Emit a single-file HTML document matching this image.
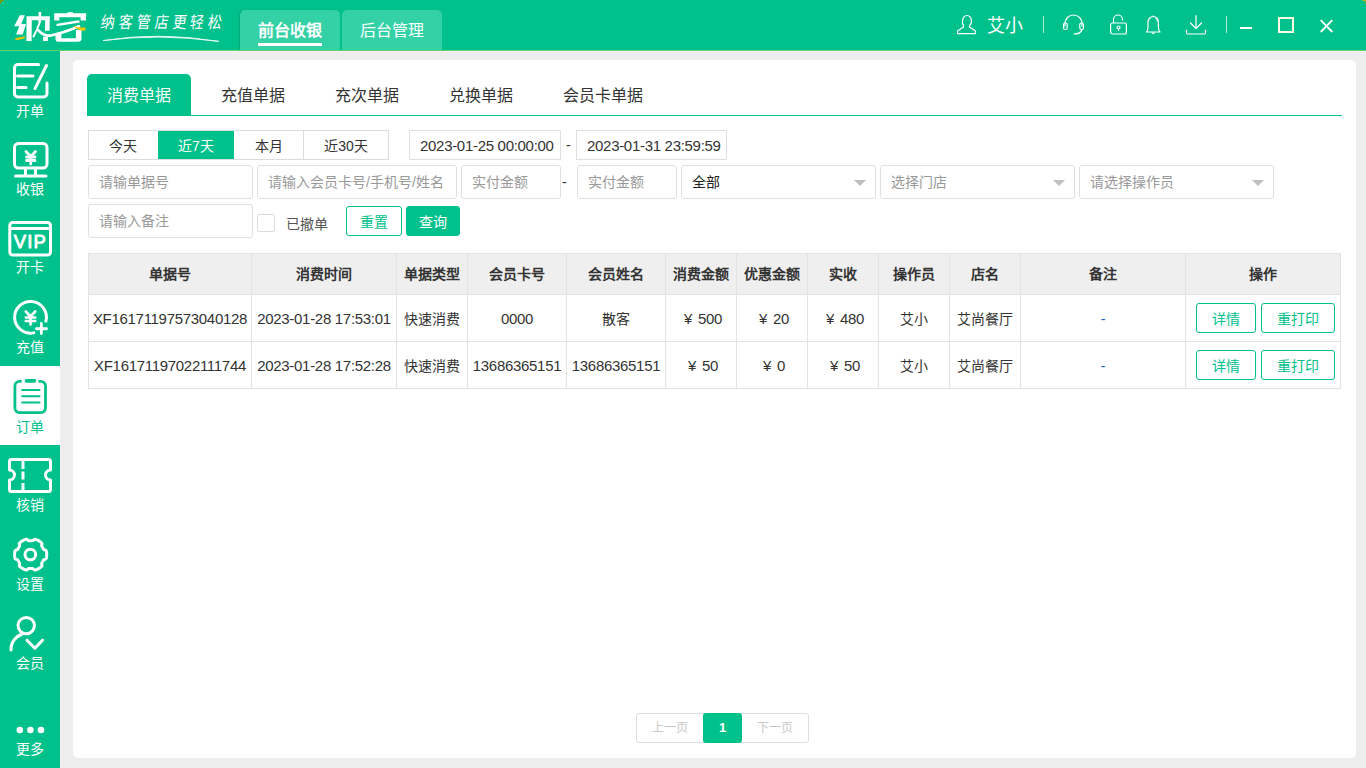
<!DOCTYPE html>
<html lang="zh-CN">
<head>
<meta charset="utf-8">
<style>
*{box-sizing:border-box;margin:0;padding:0}
html,body{width:1366px;height:768px;overflow:hidden}
body{position:relative;background:#ededed;font-family:"Liberation Sans",sans-serif;font-size:14px;color:#333}
.abs{position:absolute}
#top{position:absolute;left:0;top:0;width:1366px;height:50px;background:#00c08b}
#gline{position:absolute;left:0;top:50px;width:1366px;height:1px;background:#5cd46c}
#pline{position:absolute;left:60px;top:51px;width:1306px;height:1px;background:#f8eef4}
#vline{position:absolute;left:60px;top:51px;width:1px;height:717px;background:#f8eef4}
#side{position:absolute;left:0;top:51px;width:60px;height:717px;background:#00c08b}
.item{position:absolute;left:0;width:60px;height:79px;color:#fff}
.item svg{position:absolute;left:0;top:0}
.item .lb{position:absolute;left:0;width:60px;text-align:center;font-size:14px;line-height:16px}
.item.act{background:#fff;color:#00c08b}
.ttab{position:absolute;top:10px;height:40px;width:100px;background:#33d1a5;border-radius:5px 5px 0 0;color:#fff;font-size:16px;line-height:42px;text-align:center}
#card{position:absolute;left:73px;top:60px;width:1283px;height:698px;background:#fff;border-radius:5px}
.tab{position:absolute;top:74px;height:42px;line-height:44px;font-size:16px;color:#333;padding:0 20px}
.tab.act{background:#00c08b;color:#fff;border-radius:5px 5px 0 0}
#tabline{position:absolute;left:87px;top:115px;width:1255px;height:1px;background:#00c08b}
.bt{position:absolute;top:131px;height:30px;line-height:30px;text-align:center;color:#333}
.inp{position:absolute;height:34px;border:1px solid #e0e0e0;border-radius:3px;line-height:32px;padding-left:10px;color:#999;background:#fff;white-space:nowrap;overflow:hidden}
.arrow{position:absolute;top:14px;right:9px;width:0;height:0;border-left:6px solid transparent;border-right:6px solid transparent;border-top:6px solid #bfbfbf}
.gbtn{position:absolute;height:30px;line-height:30px;border:1px solid #00c08b;border-radius:3px;color:#00c08b;text-align:center;background:#fff}
table{position:absolute;left:88px;top:253px;border-collapse:collapse;table-layout:fixed}
td,th{border:1px solid #e3e3e3;text-align:center;white-space:nowrap;padding:0;overflow:hidden}
th{background:#efefef;height:41px;padding-bottom:2px;font-weight:bold;font-size:14px;color:#333}
td{height:47px;color:#333}
td.bl{color:#0a66cc;padding-top:2px}
td.n{font-size:15px;letter-spacing:-0.3px}
td.y{padding-left:4px}
</style>
</head>
<body>
<div id="top">
<svg class="abs" style="left:0;top:0" width="100" height="50" viewBox="0 0 100 50">
<g fill="#fff" stroke="none">
<polygon points="19.8,15.3 24.9,15.3 21.3,23.9 26.1,23.9 22.6,34.6 16,34.6 19.4,26.2 14.2,26.2"/>
<polygon points="26.6,16.2 31.8,16.2 31.6,41 26.4,41"/>
<polygon points="31.5,16.2 49.8,16.2 49.6,30.8 45,30.8 45.1,20.2 31.5,20.2"/>
<polygon points="38.6,12 41.2,12 41,22 38.4,22"/>
<polygon points="43,36.8 48,36.8 47.8,41 43,41"/>
<polygon points="54.2,13.2 86.2,13.2 86,20.5 80.6,20.5 80.6,17.3 59.4,17.3 59.4,20.5 54.2,20.5"/>
<polygon points="67.5,12.2 73.2,12.2 73.2,14 67.5,14"/>
</g>
<g fill="none" stroke="#fff" stroke-linecap="round">
<path d="M40 21.5 Q37.5 29.5 33.5 36.5" stroke-width="2"/>
<path d="M38.5 30.5 Q44 36.3 50.5 35.6 Q62 33.5 79 26.3" stroke-width="2.6"/>
<path d="M57.5 24.8 L78.5 21.5" stroke-width="2.3"/>
</g>
<path d="M55.5 34 Q56 33 61.4 32.2 V38.2 H75.9 V30 L81.5 29.5 V40 Q81 41.8 78 41.8 H58 Q55.5 41.8 55.5 39.5 Z" fill="#fff"/>
<path d="M15.3 38.2 Q20 37 25.2 36.2 L24.6 38.2 Q20 39.6 15.5 40.2 Z" fill="#f4c400"/>
<path d="M73.5 26.2 Q78 28 85.8 27.5 L85 30.8 Q79 31 73.5 26.2 Z" fill="#f4c400"/>
</svg>
<div class="abs" style="left:101px;top:12.5px;font-family:'Liberation Serif',serif;font-size:14px;line-height:20px;color:#fff;font-weight:200;letter-spacing:3.8px;white-space:nowrap;transform:skewX(-8deg) scaleY(1.18);transform-origin:0 50%">纳客管店更轻松</div>
<svg class="abs" style="left:100px;top:30px" width="130" height="15" viewBox="0 0 130 15"><path d="M3 10.6 Q58 1.5 119 11.4 Q58 3.2 3 10.6 Z" fill="#fff" stroke="#fff" stroke-width="0.9" stroke-linejoin="round" opacity="0.92"/></svg>
<div class="ttab" style="left:240px;box-shadow:-1px 0 1.5px rgba(0,70,40,0.18)"><b>前台收银</b><div class="abs" style="left:18px;top:33px;width:64px;height:2.5px;background:#fff;line-height:0"></div></div>
<div class="ttab" style="left:342px">后台管理</div>
<svg class="abs" style="left:955px;top:13px" width="24" height="24" viewBox="0 0 24 24" fill="none" stroke="#fff" stroke-width="1.2">
<path d="M7.5 8 a4.5 5.5 0 0 1 9 0 a4.5 5.5 0 0 1 -2 4.7 v1.3 l6 4 v2.6 H2.5 v-2.6 l6 -4 v-1.3 a4.5 5.5 0 0 1 -1 -4.7 Z" stroke-linejoin="round"/>
</svg>
<div class="abs" style="left:987px;top:14px;font-size:18px;line-height:24px;color:#fff">艾小</div>
<div class="abs" style="left:1043px;top:16px;width:1px;height:17px;background:#b5ecd6"></div>
<svg class="abs" style="left:1061px;top:13px" width="25" height="24" viewBox="0 0 25 24" fill="none" stroke="#fff" stroke-width="1.2" stroke-linecap="round">
<path d="M4 13 V10.5 a8.5 8.5 0 0 1 17 0 V13"/>
<rect x="2.6" y="10" width="3.6" height="6.5" rx="1.5"/><rect x="18.8" y="10" width="3.6" height="6.5" rx="1.5"/>
<path d="M21 16.5 Q20 21 13 21"/>
</svg>
<svg class="abs" style="left:1108px;top:13px" width="20" height="24" viewBox="0 0 20 24" fill="none" stroke="#fff" stroke-width="1.2">
<path d="M5.5 10 V6.5 a4.5 4.5 0 0 1 9 0 V7.5"/>
<rect x="2.6" y="10" width="15.8" height="11" rx="2"/>
<circle cx="10.5" cy="14.5" r="1.5"/><path d="M10.5 16 V18"/>
</svg>
<svg class="abs" style="left:1143px;top:13px" width="20" height="24" viewBox="0 0 20 24" fill="none" stroke="#fff" stroke-width="1.2" stroke-linejoin="round">
<path d="M3.5 19 Q5 17.5 5 14 V9.5 a5.2 6 0 0 1 10.4 0 V14 Q15.4 17.5 17 19 Z"/>
<path d="M8.8 19.5 Q10.2 21.5 11.6 19.5"/><path d="M10.2 2.5 V3.5"/><path d="M12.8 5.5 Q14 6.5 14.2 8.2" stroke-width="0.9"/>
</svg>
<svg class="abs" style="left:1184px;top:13px" width="24" height="24" viewBox="0 0 24 24" fill="none" stroke="#fff" stroke-width="1.2" stroke-linecap="round" stroke-linejoin="round">
<path d="M12 2.5 V15.5 M6.5 10 L12 15.5 L17.5 10"/>
<path d="M2.5 17 V19.5 Q2.5 21 4 21 H20 Q21.5 21 21.5 19.5 V17"/>
</svg>
<div class="abs" style="left:1226px;top:16px;width:1px;height:17px;background:#b5ecd6"></div>
<div class="abs" style="left:1240px;top:27px;width:12px;height:2px;background:#fff"></div>
<div class="abs" style="left:1278px;top:17px;width:16px;height:16px;border:2px solid #fffbe6"></div>
<svg class="abs" style="left:1318px;top:18px" width="16" height="16" viewBox="0 0 16 16" stroke="#fff" stroke-width="1.8"><path d="M2.7 2.2 L14.3 14 M14.3 2.2 L2.7 14"/></svg>
</div>

<div id="gline"></div>
<div id="side">
<div class="item" style="top:-1px">
<svg width="60" height="79" viewBox="0 0 60 79" fill="none" stroke="#fff" stroke-width="3" stroke-linecap="round" stroke-linejoin="round">
<path d="M38.5 14.5 H18 a3.5 3.5 0 0 0 -3.5 3.5 V43.5 a3.5 3.5 0 0 0 3.5 3.5 H43.5 a3.5 3.5 0 0 0 3.5 -3.5 V33"/>
<path d="M17.5 26 H33"/><path d="M17.5 37.5 H26"/><path d="M46.5 15.5 L35 38.5"/>
</svg>
<div class="lb" style="top:53px">开单</div>
</div>
<div class="item" style="top:78px">
<svg width="60" height="79" viewBox="0 0 60 79" fill="none" stroke="#fff" stroke-width="3" stroke-linecap="round" stroke-linejoin="round">
<rect x="14.5" y="14.5" width="32.5" height="24.5" rx="4"/>
<path d="M25.5 39 V46" stroke-linecap="butt"/><path d="M35.5 39 V46" stroke-linecap="butt"/><path d="M15.5 47 H46"/>
<path d="M26 22.5 L30.7 27.5 L35.5 22.5 M30.7 27.5 V35 M26.5 28 H35 M26.5 31.5 H35" stroke-width="2.8"/>
</svg>
<div class="lb" style="top:52px">收银</div>
</div>
<div class="item" style="top:157px">
<svg width="60" height="79" viewBox="0 0 60 79" fill="none" stroke="#fff" stroke-width="3" stroke-linejoin="round">
<rect x="9.8" y="14.5" width="40.7" height="32.5" rx="3"/>
<path d="M10 20.5 H50"/>
<text x="30.4" y="39.6" fill="#fff" stroke="#fff" stroke-width="0.9" font-family="Liberation Sans" font-size="18.5" text-anchor="middle" letter-spacing="1.2">VIP</text>
</svg>
<div class="lb" style="top:50.5px">开卡</div>
</div>
<div class="item" style="top:236px">
<svg width="60" height="79" viewBox="0 0 60 79" fill="none" stroke="#fff" stroke-width="3" stroke-linecap="round" stroke-linejoin="round">
<path d="M45.93 34.15 A15.9 15.9 0 1 0 33.8 45.85"/>
<path d="M25.8 24.5 L30.5 29.5 L35.2 24.5 M30.5 29.5 V37.5 M25.8 30.5 H35.2 M25.8 34 H35.2" stroke-width="2.6"/>
<path d="M36.5 41.75 H46.5 M41.35 36.5 V46.5" stroke-width="2.8"/>
</svg>
<div class="lb" style="top:51.5px">充值</div>
</div>
<div class="item act" style="top:315px">
<svg width="60" height="79" viewBox="0 0 60 79" fill="none" stroke="#00c08b" stroke-width="2.8" stroke-linecap="round" stroke-linejoin="round">
<path d="M20.5 15.4 H19.4 a4.5 4.5 0 0 0 -4.5 4.5 V42.1 a4.5 4.5 0 0 0 4.5 4.5 H41 a4.5 4.5 0 0 0 4.5 -4.5 V19.9 a4.5 4.5 0 0 0 -4.5 -4.5 H39.5"/>
<path d="M26.5 14.9 H34.5" stroke-width="3.6"/>
<path d="M22.2 24 H39.5 M22.2 30.3 H39.5 M22.2 36.5 H39.5" stroke-width="2.1"/>
</svg>
<div class="lb" style="top:53px">订单</div>
</div>
<div class="item" style="top:394px">
<svg width="60" height="79" viewBox="0 0 60 79" fill="none" stroke="#fff" stroke-width="3" stroke-linecap="round" stroke-linejoin="round">
<path d="M11.5 14.5 H48.5 a2 2 0 0 1 2 2 V25 a5 5 0 0 0 0 10 V44.5 a2 2 0 0 1 -2 2 H11.5 a2 2 0 0 1 -2 -2 V35 a5 5 0 0 0 0 -10 V16.5 a2 2 0 0 1 2 -2 Z"/>
<path d="M23 16 V24 M23 26.5 V34.4 M23 38 V45.5" stroke-linecap="butt"/>
</svg>
<div class="lb" style="top:51.5px">核销</div>
</div>
<div class="item" style="top:473px">
<svg width="60" height="79" viewBox="0 0 60 79" fill="none" stroke="#fff" stroke-width="3" stroke-linecap="round" stroke-linejoin="round">
<path id="gear" d="M46.70 30.65 L46.70 30.93 L46.69 31.21 L46.68 31.49 L46.66 31.77 L46.64 32.05 L46.61 32.33 L46.58 32.61 L46.54 32.88 L46.50 33.16 L46.45 33.44 L46.40 33.71 L46.34 33.98 L46.26 34.25 L46.17 34.52 L46.03 34.77 L45.82 35.00 L45.50 35.19 L45.05 35.33 L44.58 35.44 L44.17 35.57 L43.88 35.73 L43.67 35.91 L43.52 36.11 L43.39 36.32 L43.27 36.53 L43.15 36.75 L43.04 36.96 L42.92 37.18 L42.81 37.39 L42.69 37.60 L42.57 37.81 L42.44 38.02 L42.31 38.22 L42.18 38.43 L42.05 38.64 L41.93 38.84 L41.81 39.06 L41.72 39.30 L41.66 39.57 L41.67 39.90 L41.77 40.31 L41.90 40.78 L42.00 41.24 L42.00 41.61 L41.91 41.91 L41.76 42.16 L41.58 42.37 L41.38 42.57 L41.18 42.76 L40.97 42.94 L40.75 43.12 L40.53 43.30 L40.31 43.47 L40.08 43.63 L39.86 43.80 L39.63 43.96 L39.39 44.11 L39.16 44.26 L38.92 44.41 L38.67 44.55 L38.43 44.69 L38.19 44.82 L37.94 44.95 L37.69 45.08 L37.43 45.20 L37.18 45.31 L36.92 45.42 L36.66 45.53 L36.40 45.63 L36.14 45.73 L35.87 45.82 L35.61 45.90 L35.34 45.98 L35.06 46.02 L34.77 46.03 L34.47 45.97 L34.14 45.78 L33.80 45.46 L33.46 45.11 L33.15 44.82 L32.87 44.64 L32.60 44.56 L32.35 44.52 L32.11 44.52 L31.86 44.52 L31.62 44.53 L31.38 44.54 L31.14 44.54 L30.89 44.55 L30.65 44.55 L30.41 44.55 L30.16 44.54 L29.92 44.54 L29.68 44.53 L29.44 44.52 L29.19 44.52 L28.95 44.52 L28.70 44.56 L28.43 44.64 L28.15 44.82 L27.84 45.11 L27.50 45.46 L27.16 45.78 L26.83 45.97 L26.53 46.03 L26.24 46.02 L25.96 45.98 L25.69 45.90 L25.43 45.82 L25.16 45.73 L24.90 45.63 L24.64 45.53 L24.38 45.42 L24.12 45.31 L23.87 45.20 L23.61 45.08 L23.36 44.95 L23.11 44.82 L22.87 44.69 L22.62 44.55 L22.38 44.41 L22.14 44.26 L21.91 44.11 L21.67 43.96 L21.44 43.80 L21.22 43.63 L20.99 43.47 L20.77 43.30 L20.55 43.12 L20.33 42.94 L20.12 42.76 L19.92 42.57 L19.72 42.37 L19.54 42.16 L19.39 41.91 L19.30 41.61 L19.30 41.24 L19.40 40.78 L19.53 40.31 L19.63 39.90 L19.64 39.57 L19.58 39.30 L19.49 39.06 L19.37 38.84 L19.25 38.64 L19.12 38.43 L18.99 38.22 L18.86 38.02 L18.73 37.81 L18.61 37.60 L18.49 37.39 L18.38 37.18 L18.26 36.96 L18.15 36.75 L18.03 36.53 L17.91 36.32 L17.78 36.11 L17.63 35.91 L17.42 35.73 L17.13 35.57 L16.72 35.44 L16.25 35.33 L15.80 35.19 L15.48 35.00 L15.27 34.77 L15.13 34.52 L15.04 34.25 L14.96 33.98 L14.90 33.71 L14.85 33.44 L14.80 33.16 L14.76 32.88 L14.72 32.61 L14.69 32.33 L14.66 32.05 L14.64 31.77 L14.62 31.49 L14.61 31.21 L14.60 30.93 L14.60 30.65 L14.60 30.37 L14.61 30.09 L14.62 29.81 L14.64 29.53 L14.66 29.25 L14.69 28.97 L14.72 28.69 L14.76 28.42 L14.80 28.14 L14.85 27.86 L14.90 27.59 L14.96 27.32 L15.04 27.05 L15.13 26.78 L15.27 26.53 L15.48 26.30 L15.80 26.11 L16.25 25.97 L16.72 25.86 L17.13 25.73 L17.42 25.57 L17.63 25.39 L17.78 25.19 L17.91 24.98 L18.03 24.77 L18.15 24.55 L18.26 24.34 L18.38 24.12 L18.49 23.91 L18.61 23.70 L18.73 23.49 L18.86 23.28 L18.99 23.08 L19.12 22.87 L19.25 22.66 L19.37 22.46 L19.49 22.24 L19.58 22.00 L19.64 21.73 L19.63 21.40 L19.53 20.99 L19.40 20.52 L19.30 20.06 L19.30 19.69 L19.39 19.39 L19.54 19.14 L19.72 18.93 L19.92 18.73 L20.12 18.54 L20.33 18.36 L20.55 18.18 L20.77 18.00 L20.99 17.83 L21.22 17.67 L21.44 17.50 L21.67 17.34 L21.91 17.19 L22.14 17.04 L22.38 16.89 L22.62 16.75 L22.87 16.61 L23.11 16.48 L23.36 16.35 L23.61 16.22 L23.87 16.10 L24.12 15.99 L24.38 15.88 L24.64 15.77 L24.90 15.67 L25.16 15.57 L25.43 15.48 L25.69 15.40 L25.96 15.32 L26.24 15.28 L26.53 15.27 L26.83 15.33 L27.16 15.52 L27.50 15.84 L27.84 16.19 L28.15 16.48 L28.43 16.66 L28.70 16.74 L28.95 16.78 L29.19 16.78 L29.44 16.78 L29.68 16.77 L29.92 16.76 L30.16 16.76 L30.41 16.75 L30.65 16.75 L30.89 16.75 L31.14 16.76 L31.38 16.76 L31.62 16.77 L31.86 16.78 L32.11 16.78 L32.35 16.78 L32.60 16.74 L32.87 16.66 L33.15 16.48 L33.46 16.19 L33.80 15.84 L34.14 15.52 L34.47 15.33 L34.77 15.27 L35.06 15.28 L35.34 15.32 L35.61 15.40 L35.87 15.48 L36.14 15.57 L36.40 15.67 L36.66 15.77 L36.92 15.88 L37.18 15.99 L37.43 16.10 L37.69 16.22 L37.94 16.35 L38.19 16.48 L38.43 16.61 L38.67 16.75 L38.92 16.89 L39.16 17.04 L39.39 17.19 L39.63 17.34 L39.86 17.50 L40.08 17.67 L40.31 17.83 L40.53 18.00 L40.75 18.18 L40.97 18.36 L41.18 18.54 L41.38 18.73 L41.58 18.93 L41.76 19.14 L41.91 19.39 L42.00 19.69 L42.00 20.06 L41.90 20.52 L41.77 20.99 L41.67 21.40 L41.66 21.73 L41.72 22.00 L41.81 22.24 L41.93 22.46 L42.05 22.66 L42.18 22.87 L42.31 23.08 L42.44 23.28 L42.57 23.49 L42.69 23.70 L42.81 23.91 L42.92 24.12 L43.04 24.34 L43.15 24.55 L43.27 24.77 L43.39 24.98 L43.52 25.19 L43.67 25.39 L43.88 25.57 L44.17 25.73 L44.58 25.86 L45.05 25.97 L45.50 26.11 L45.82 26.30 L46.03 26.53 L46.17 26.78 L46.26 27.05 L46.34 27.32 L46.40 27.59 L46.45 27.86 L46.50 28.14 L46.54 28.42 L46.58 28.69 L46.61 28.97 L46.64 29.25 L46.66 29.53 L46.68 29.81 L46.69 30.09 L46.70 30.37 L46.70 30.65Z"/>
<circle cx="30.35" cy="30.6" r="5.35"/>
</svg>
<div class="lb" style="top:52px">设置</div>
</div>
<div class="item" style="top:552px">
<svg width="60" height="79" viewBox="0 0 60 79" fill="none" stroke="#fff" stroke-width="3" stroke-linecap="round" stroke-linejoin="round">
<circle cx="26.25" cy="22.6" r="8.2"/>
<path d="M21.5 31.5 A15.5 15.5 0 0 0 11 47"/>
<path d="M27 37.2 L34.9 45.3 L42.5 37.2"/>
</svg>
<div class="lb" style="top:52px">会员</div>
</div>
<div class="item" style="top:637px">
<svg width="60" height="79" viewBox="0 0 60 79" fill="#fff" stroke="none">
<circle cx="19.8" cy="42" r="3.3"/><circle cx="30.4" cy="42" r="3.3"/><circle cx="41" cy="42" r="3.3"/>
</svg>
<div class="lb" style="top:53px">更多</div>
</div>
</div>
<div id="pline"></div>
<div id="vline"></div>
<div id="card"></div>
<div class="tab act" style="left:87px;width:104px">消费单据</div>
<div class="tab" style="left:201px">充值单据</div>
<div class="tab" style="left:315px">充次单据</div>
<div class="tab" style="left:429px">兑换单据</div>
<div class="tab" style="left:543px">会员卡单据</div>
<div id="tabline"></div>
<div class="abs" style="left:88px;top:130px;width:301px;height:30px;border:1px solid #dcdcdc;background:#fff"></div>
<div class="abs" style="left:303px;top:131px;width:1px;height:28px;background:#dcdcdc"></div>
<div class="abs" style="left:158px;top:131px;width:76px;height:28px;background:#00c08b"></div>
<div class="bt" style="left:88px;width:70px">今天</div>
<div class="bt" style="left:158px;width:76px;color:#fff">近7天</div>
<div class="bt" style="left:234px;width:69px">本月</div>
<div class="bt" style="left:304px;width:84px">近30天</div>
<div class="inp" style="left:409px;top:130px;width:152px;height:30px;line-height:28px;border-radius:0;color:#333;padding-left:10px;padding-top:1px;font-size:15px;letter-spacing:-0.3px">2023-01-25 00:00:00</div>
<div class="abs" style="left:566px;top:130px;line-height:30px;color:#333">-</div>
<div class="inp" style="left:576px;top:130px;width:151px;height:30px;line-height:28px;border-radius:0;color:#333;padding-left:10px;padding-top:1px;font-size:15px;letter-spacing:-0.3px">2023-01-31 23:59:59</div>
<div class="inp" style="left:88px;top:165px;width:165px">请输单据号</div>
<div class="inp" style="left:257px;top:165px;width:200px">请输入会员卡号/手机号/姓名</div>
<div class="inp" style="left:461px;top:165px;width:100px">实付金额</div>
<div class="abs" style="left:562px;top:165px;line-height:34px;color:#333">-</div>
<div class="inp" style="left:577px;top:165px;width:100px">实付金额</div>
<div class="inp" style="left:681px;top:165px;width:195px;color:#222">全部<i class="arrow"></i></div>
<div class="inp" style="left:880px;top:165px;width:195px">选择门店<i class="arrow"></i></div>
<div class="inp" style="left:1079px;top:165px;width:195px">请选择操作员<i class="arrow"></i></div>
<div class="inp" style="left:88px;top:204px;width:165px">请输入备注</div>
<div class="abs" style="left:257px;top:214px;width:18px;height:18px;border:1px solid #dcdcdc;border-radius:2px"></div>
<div class="abs" style="left:286px;top:214px;line-height:20px;color:#555">已撤单</div>
<div class="gbtn" style="left:346px;top:206px;width:56px">重置</div>
<div class="gbtn" style="left:406px;top:206px;width:54px;background:#00c08b;color:#fff">查询</div>
<table>
<colgroup><col style="width:163px"><col style="width:145px"><col style="width:71px"><col style="width:99px"><col style="width:99px"><col style="width:71px"><col style="width:71px"><col style="width:71px"><col style="width:71px"><col style="width:71px"><col style="width:165px"><col style="width:155px"></colgroup>
<tr><th>单据号</th><th>消费时间</th><th>单据类型</th><th>会员卡号</th><th>会员姓名</th><th>消费金额</th><th>优惠金额</th><th>实收</th><th>操作员</th><th>店名</th><th>备注</th><th>操作</th></tr>
<tr><td class="n">XF16171197573040128</td><td class="n">2023-01-28 17:53:01</td><td>快速消费</td><td class="n">0000</td><td>散客</td><td class="n y">¥<i style="display:inline-block;width:2px"></i> 500</td><td class="n y">¥<i style="display:inline-block;width:2px"></i> 20</td><td class="n y">¥<i style="display:inline-block;width:2px"></i> 480</td><td>艾小</td><td>艾尚餐厅</td><td class="bl">-</td><td></td></tr>
<tr><td class="n">XF16171197022111744</td><td class="n">2023-01-28 17:52:28</td><td>快速消费</td><td class="n">13686365151</td><td class="n">13686365151</td><td class="n y">¥<i style="display:inline-block;width:2px"></i> 50</td><td class="n y">¥<i style="display:inline-block;width:2px"></i> 0</td><td class="n y">¥<i style="display:inline-block;width:2px"></i> 50</td><td>艾小</td><td>艾尚餐厅</td><td class="bl">-</td><td></td></tr>
</table>
<div class="gbtn" style="left:1196px;top:303px;width:60px">详情</div>
<div class="gbtn" style="left:1261px;top:303px;width:74px">重打印</div>
<div class="gbtn" style="left:1196px;top:350px;width:60px">详情</div>
<div class="gbtn" style="left:1261px;top:350px;width:74px">重打印</div>
<div class="abs" style="left:636px;top:713px;width:173px;height:30px;border:1px solid #dddddd;border-radius:3px"></div>
<div class="abs" style="left:652px;top:713px;line-height:30px;font-size:12px;color:#c8c8c8">上一页</div>
<div class="abs" style="left:757px;top:713px;line-height:30px;font-size:12px;color:#c8c8c8">下一页</div>
<div class="abs" style="left:703px;top:713px;width:39px;height:30px;background:#00c08b;border-radius:3px;color:#fff;font-weight:bold;text-align:center;line-height:30px;font-size:13px">1</div>

<div class="abs" style="left:0;top:0;width:4px;height:1px;background:#7a9a00"></div>
<div class="abs" style="left:0;top:0;width:1px;height:4px;background:#7a9a00"></div>
<div class="abs" style="left:1px;top:1px;width:1px;height:1px;background:#5fae3a"></div>
<div class="abs" style="left:1362px;top:0;width:4px;height:1px;background:#a8b840"></div>
<div class="abs" style="left:1365px;top:0;width:1px;height:4px;background:#8aa820"></div>
</body>
</html>
